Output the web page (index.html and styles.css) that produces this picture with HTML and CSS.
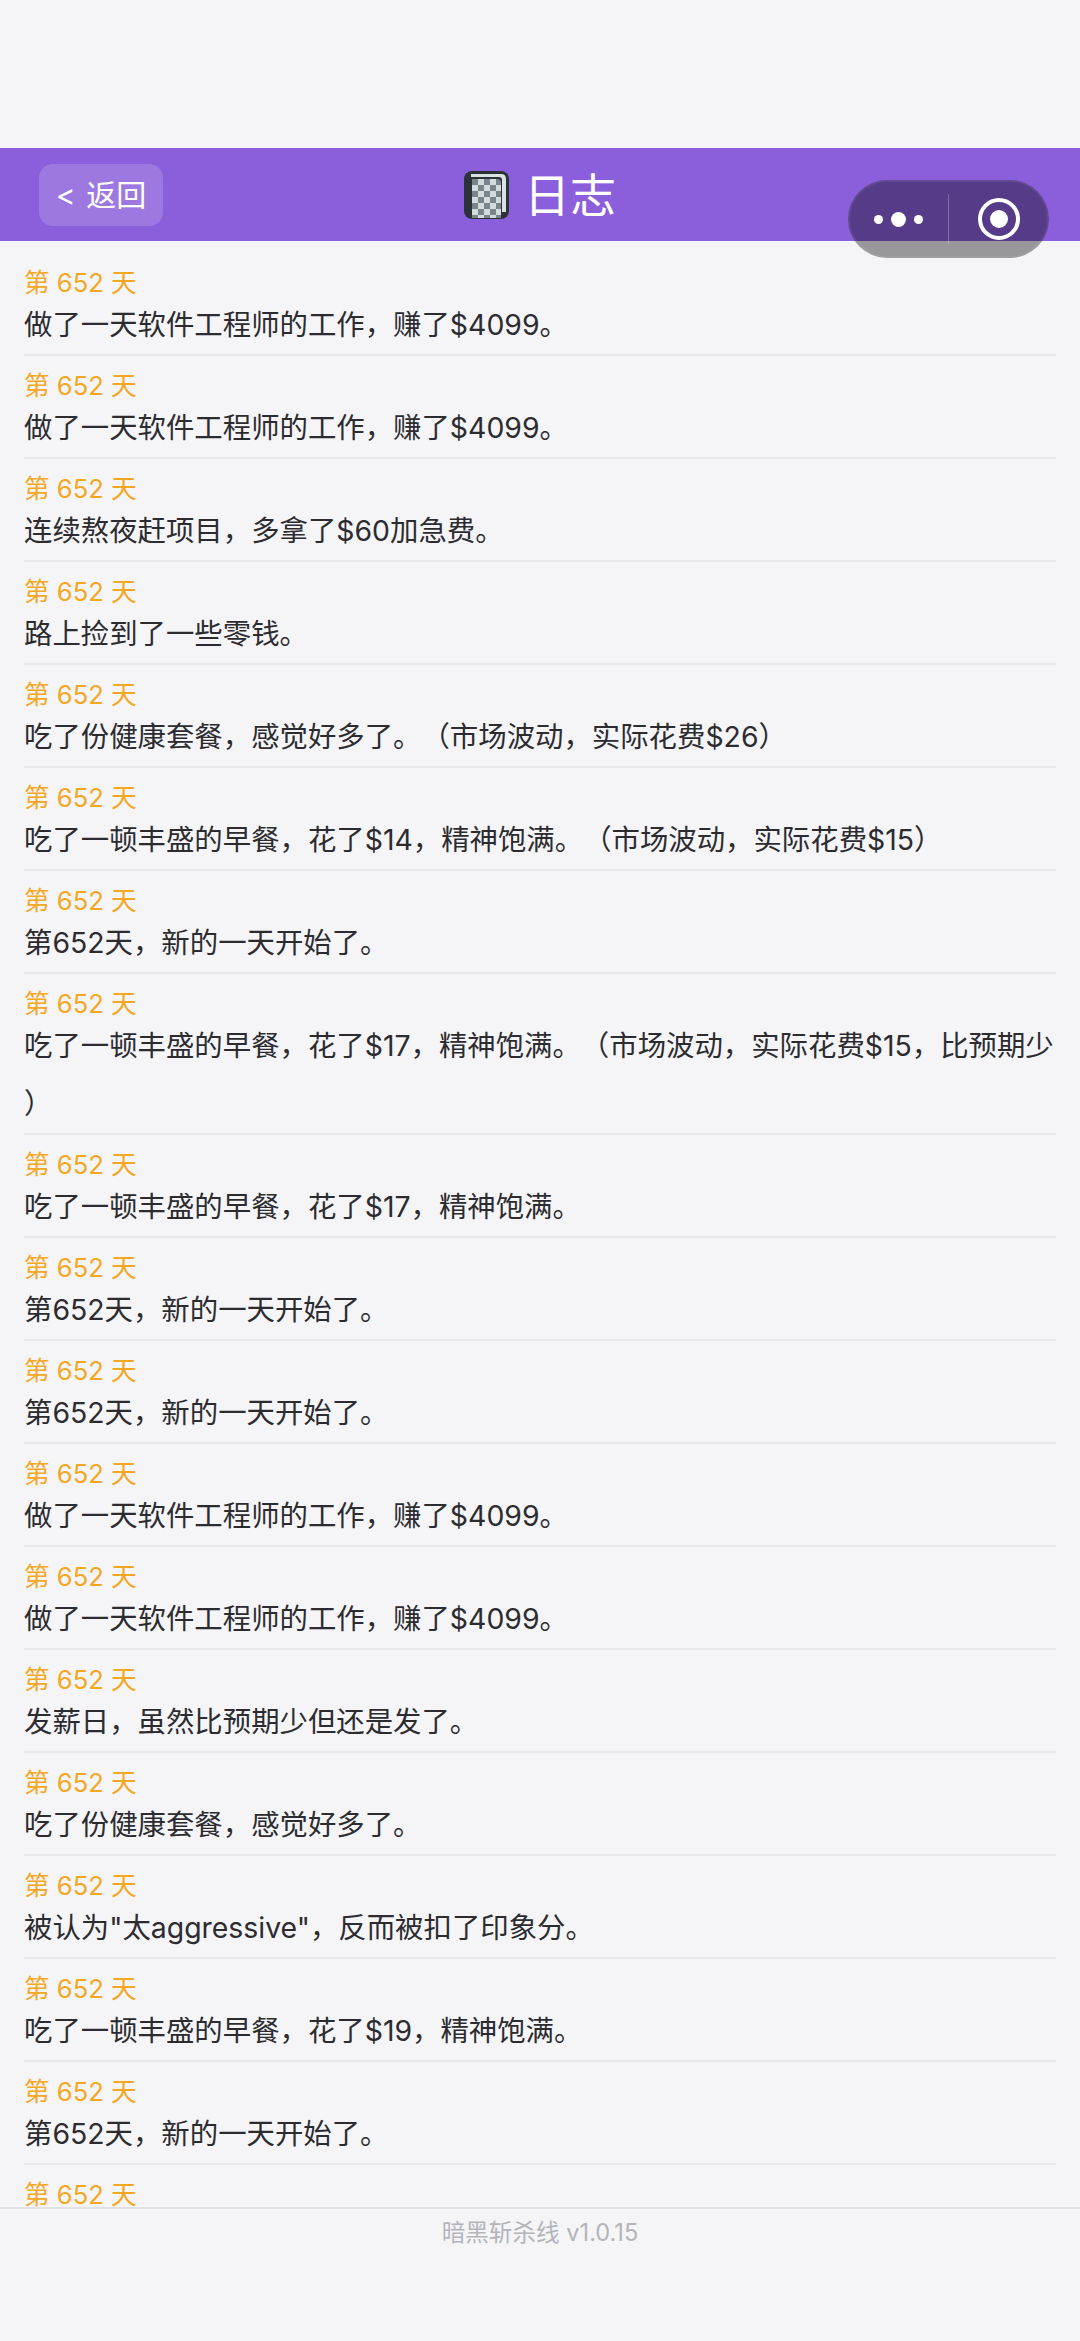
FILE: index.html
```html
<!DOCTYPE html>
<html lang="zh-CN">
<head>
    <title>日志</title>
    <link rel="stylesheet" href="styles.css">
</head>
<body>

<div class="page">
    <div class="status-space"></div>

    <div class="header">
        <div class="back-btn">&lt; 返回</div>
        <div class="title">
            <svg class="title-icon" width="45" height="48" viewBox="0 0 45 48">
                <defs>
                    <pattern id="checks" width="12" height="12" patternUnits="userSpaceOnUse" x="8" y="8">
                        <rect width="12" height="12" fill="#d3dcdc"/>
                        <rect width="6" height="6" fill="#78858a"/>
                        <rect x="6" y="6" width="6" height="6" fill="#78858a"/>
                    </pattern>
                </defs>
                <rect x="0" y="0" width="45" height="48" rx="8" fill="#2b3238"/>
                <path d="M7 3 H37 Q42 3 42 8 V41 H38 V9 Q38 6 35 6 H7 Z" fill="#d9e2e0"/>
                <path d="M8 8 H33 Q37 8 37 12 V47 H8 Z" fill="url(#checks)"/>
            </svg>
            <span>日志</span>
        </div>
    </div>

    <div class="capsule">
        <div class="capsule-dots">
            <span class="dot"></span>
            <span class="dot dot-big"></span>
            <span class="dot"></span>
        </div>
        <div class="capsule-line"></div>
        <div class="capsule-target"><span></span></div>
    </div>

    <div class="log-list">
        <div class="log-item"><div class="log-day">第 652 天</div><div class="log-text">做了一天软件工程师的工作，赚了$4099。</div></div>
        <div class="log-item"><div class="log-day">第 652 天</div><div class="log-text">做了一天软件工程师的工作，赚了$4099。</div></div>
        <div class="log-item"><div class="log-day">第 652 天</div><div class="log-text">连续熬夜赶项目，多拿了$60加急费。</div></div>
        <div class="log-item"><div class="log-day">第 652 天</div><div class="log-text">路上捡到了一些零钱。</div></div>
        <div class="log-item"><div class="log-day">第 652 天</div><div class="log-text">吃了份健康套餐，感觉好多了。（市场波动，实际花费$26）</div></div>
        <div class="log-item"><div class="log-day">第 652 天</div><div class="log-text">吃了一顿丰盛的早餐，花了$14，精神饱满。（市场波动，实际花费$15）</div></div>
        <div class="log-item"><div class="log-day">第 652 天</div><div class="log-text">第652天，新的一天开始了。</div></div>
        <div class="log-item"><div class="log-day">第 652 天</div><div class="log-text">吃了一顿丰盛的早餐，花了$17，精神饱满。（市场波动，实际花费$15，比预期少）</div></div>
        <div class="log-item"><div class="log-day">第 652 天</div><div class="log-text">吃了一顿丰盛的早餐，花了$17，精神饱满。</div></div>
        <div class="log-item"><div class="log-day">第 652 天</div><div class="log-text">第652天，新的一天开始了。</div></div>
        <div class="log-item"><div class="log-day">第 652 天</div><div class="log-text">第652天，新的一天开始了。</div></div>
        <div class="log-item"><div class="log-day">第 652 天</div><div class="log-text">做了一天软件工程师的工作，赚了$4099。</div></div>
        <div class="log-item"><div class="log-day">第 652 天</div><div class="log-text">做了一天软件工程师的工作，赚了$4099。</div></div>
        <div class="log-item"><div class="log-day">第 652 天</div><div class="log-text">发薪日，虽然比预期少但还是发了。</div></div>
        <div class="log-item"><div class="log-day">第 652 天</div><div class="log-text">吃了份健康套餐，感觉好多了。</div></div>
        <div class="log-item"><div class="log-day">第 652 天</div><div class="log-text">被认为"太aggressive"，反而被扣了印象分。</div></div>
        <div class="log-item"><div class="log-day">第 652 天</div><div class="log-text">吃了一顿丰盛的早餐，花了$19，精神饱满。</div></div>
        <div class="log-item"><div class="log-day">第 652 天</div><div class="log-text">第652天，新的一天开始了。</div></div>
        <div class="log-item log-item-last"><div class="log-day">第 652 天</div></div>
    </div>

    <div class="footer">暗黑斩杀线 v1.0.15</div>
</div>

</body>
</html>
```

FILE: styles.css
```css
* {
    box-sizing: border-box;
}
body {
    margin: 0;
    background: #f5f5f8;
    font-family: Inter, "Noto Sans CJK SC", sans-serif;
    text-spacing-trim: space-all;
}
.page {
    position: relative;
    display: flex;
    flex-direction: column;
    height: 2341px;
    overflow: hidden;
}
.status-space {
    height: 148px;
    flex: none;
}
.header {
    position: relative;
    flex: none;
    display: flex;
    align-items: center;
    justify-content: center;
    height: 93px;
    background: #8b5fdb;
    color: white;
}
.back-btn {
    position: absolute;
    left: 39px;
    top: 16px;
    width: 124px;
    height: 62px;
    line-height: 62px;
    text-align: center;
    font-size: 30px;
    word-spacing: 2px;
    border-radius: 14px;
    background: rgba(255,255,255,0.16);
}
.title {
    display: flex;
    align-items: center;
    gap: 15px;
    font-size: 46px;
    line-height: 60px;
}
.title-icon {
    flex: none;
}
.capsule {
    position: absolute;
    left: 848px;
    top: 180px;
    width: 201px;
    height: 78px;
    display: flex;
    align-items: center;
    border-radius: 39px;
    background: rgba(0,0,0,0.38);
    box-shadow: inset 0 0 0 2px rgba(255,255,255,0.07);
}
.capsule-dots {
    width: 100px;
    display: flex;
    align-items: center;
    justify-content: center;
    gap: 8px;
}
.dot {
    width: 9px;
    height: 9px;
    border-radius: 50%;
    background: white;
}
.dot-big {
    width: 15px;
    height: 15px;
}
.capsule-line {
    width: 1px;
    height: 50px;
    background: rgba(255,255,255,0.25);
}
.capsule-target {
    flex: 1;
    display: flex;
    align-items: center;
    justify-content: center;
}
.capsule-target span {
    width: 42px;
    height: 42px;
    border: 4px solid white;
    border-radius: 50%;
    display: flex;
    align-items: center;
    justify-content: center;
}
.capsule-target span::after {
    content: "";
    width: 18px;
    height: 18px;
    border-radius: 50%;
    background: white;
}
.log-list {
    flex: 1;
    min-height: 0;
    overflow: hidden;
    padding: 12px 24px 0;
}
.log-item {
    padding-top: 16px;
    border-bottom: 2px solid #e9e9ec;
}
.log-item-last {
    border-bottom: none;
}
.log-day {
    font-size: 25.6px;
    line-height: 27px;
    color: #f5a623;
}
.log-text {
    font-size: 28.4px;
    line-height: 58px;
    color: #2c2c30;
    line-break: anywhere;
}
.footer {
    flex: none;
    height: 134px;
    padding-top: 6px;
    border-top: 2px solid #e2e2e6;
    text-align: center;
    font-size: 23.6px;
    line-height: 36px;
    color: #b4b4ba;
}
```
